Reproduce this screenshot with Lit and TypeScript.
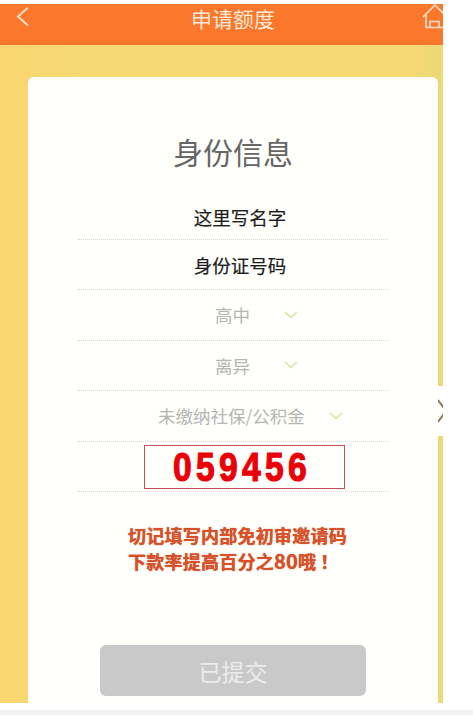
import { LitElement, html, css } from "lit";
import { customElement } from "lit/decorators.js";

const SANS = css`"Noto Sans CJK SC", "Liberation Sans", sans-serif`;

const chevron = html`<svg class="chev" viewBox="0 0 14 8" fill="none"><path d="M1 1l6 5.5L13 1" stroke="#d9dfa6" stroke-width="1.4"/></svg>`;

@customElement("app-root")
export class AppRoot extends LitElement {
  static styles = css`
    :host { display: block; width: 473px; height: 715px; background: #fff; font-family: ${SANS}; overflow: hidden; }
    .page { display: flex; flex-direction: column; height: 715px; }
    .shot { position: relative; width: 443px; height: 699px; margin-top: 4px; background: linear-gradient(90deg, #f9d670 0%, #f6d975 20%, #f6d975 93%, #ecd877 99%); display: flex; flex-direction: column; flex: none; overflow: hidden; }
    .bar { height: 41px; flex: none; background: #fb772b; display: grid; grid-template-columns: 44px 1fr 21px; align-items: start; box-sizing: border-box; }
    .back { width: 13px; height: 21px; margin: 2px 0 0 16px; }
    .title { text-align: center; font-size: 21px; line-height: 28px; color: #fde9d8; }
    .home { width: 21px; height: 25px; justify-self: end; }
    .card { flex: 1; margin: 32px 5px 0 28px; background: #fffffb; border-radius: 6px 6px 0 0; display: flex; flex-direction: column; align-items: stretch; padding: 0 50px; box-sizing: border-box; }
    h1 { margin: 51px 0 0; font-weight: 400; font-size: 30px; line-height: 46px; color: #666; text-align: center; }
    .rows { margin-top: 15px; display: flex; flex-direction: column; }
    .row { height: 50.5px; box-sizing: border-box; border-bottom: 1px dotted #d8d8d4; display: flex; align-items: center; font-size: 17.5px; color: #b5b5b5; white-space: nowrap; }
    .row.name, .row.id { color: #1c1c1c; font-size: 18.5px; -webkit-text-stroke: 0.2px #1c1c1c; justify-content: center; padding-left: 14px; }
    .row.name { padding-top: 6px; }
    .row.id { padding-top: 2px; }
    .row.short { padding-left: 137px; gap: 34px; }
    .row.long { padding-left: 80px; gap: 24px; }
    .chev { width: 14px; height: 8px; flex: none; }
    .code { height: 50px; border-bottom: 1px dotted #d8d8d4; box-sizing: border-box; display: flex; padding: 3px 0 0 66px; }
    .box { width: 201px; height: 44px; box-sizing: border-box; border: 1px solid #c8505a; display: flex; align-items: center; justify-content: center; overflow: hidden; padding-right: 4px; }
    .digits { display: block; color: #ea0008; font-family: "Liberation Sans", sans-serif; font-weight: 700; font-size: 41px; line-height: 42px; letter-spacing: 5.2px; -webkit-text-stroke: 1.2px #ea0008; transform: scaleX(0.82); white-space: nowrap; }
    .note { margin: 30px 0 0; padding-left: 50px; font-weight: 700; font-size: 18px; letter-spacing: 0.25px; line-height: 26px; color: #d9512b; text-shadow: 0 0 1px #b5451f; white-space: nowrap; }
    .num { font-size: 20px; }
    .bang { margin-left: 4px; }
    .btn { margin: auto 22px 7px; height: 51px; border-radius: 6px; background: #c9c9c9; color: #ececec; font-size: 23px; display: flex; align-items: center; justify-content: center; flex: none; }
    .gap { height: 7px; background: #fff; flex: none; }
    .foot { flex: 1; background: #f2f2f2; }
    .notch { position: absolute; right: 0; top: 382px; width: 5px; height: 50px; background: #fff; overflow: hidden; }
    .notch svg { display: block; width: 5px; height: 50px; }
  `;

  render() {
    return html`<div class="page">
      <div class="shot">
        <div class="bar">
          <svg class="back" viewBox="0 0 13 21" fill="none"><path d="M12 1.5L2 10.5l10 9" stroke="#fbdcc4" stroke-width="2"/></svg>
          <div class="title">申请额度</div>
          <svg class="home" viewBox="0 0 21 25" fill="none" stroke="#fbe0c8" stroke-width="1.6"><path d="M1 13L13 1l9 9"/><path d="M4 11v12.5h18"/><path d="M8 23v-5.5h9v5.5"/></svg>
        </div>
        <div class="card">
          <h1>身份信息</h1>
          <div class="rows">
            <div class="row name">这里写名字</div>
            <div class="row id">身份证号码</div>
            <div class="row short">高中 ${chevron}</div>
            <div class="row short">离异 ${chevron}</div>
            <div class="row long">未缴纳社保/公积金 ${chevron}</div>
            <div class="code"><div class="box"><span class="digits">059456</span></div></div>
          </div>
          <p class="note">切记填写内部免初审邀请码<br />下款率提高百分之<span class="num">80</span>哦<span class="bang">！</span></p>
          <div class="btn">已提交</div>
        </div>
        <div class="notch"><svg viewBox="0 0 5 50" fill="none"><path d="M0 14l8 11L0 36" stroke="#8a7a5a" stroke-width="2"/></svg></div>
      </div>
      <div class="gap"></div>
      <div class="foot"></div>
    </div>`;
  }
}
